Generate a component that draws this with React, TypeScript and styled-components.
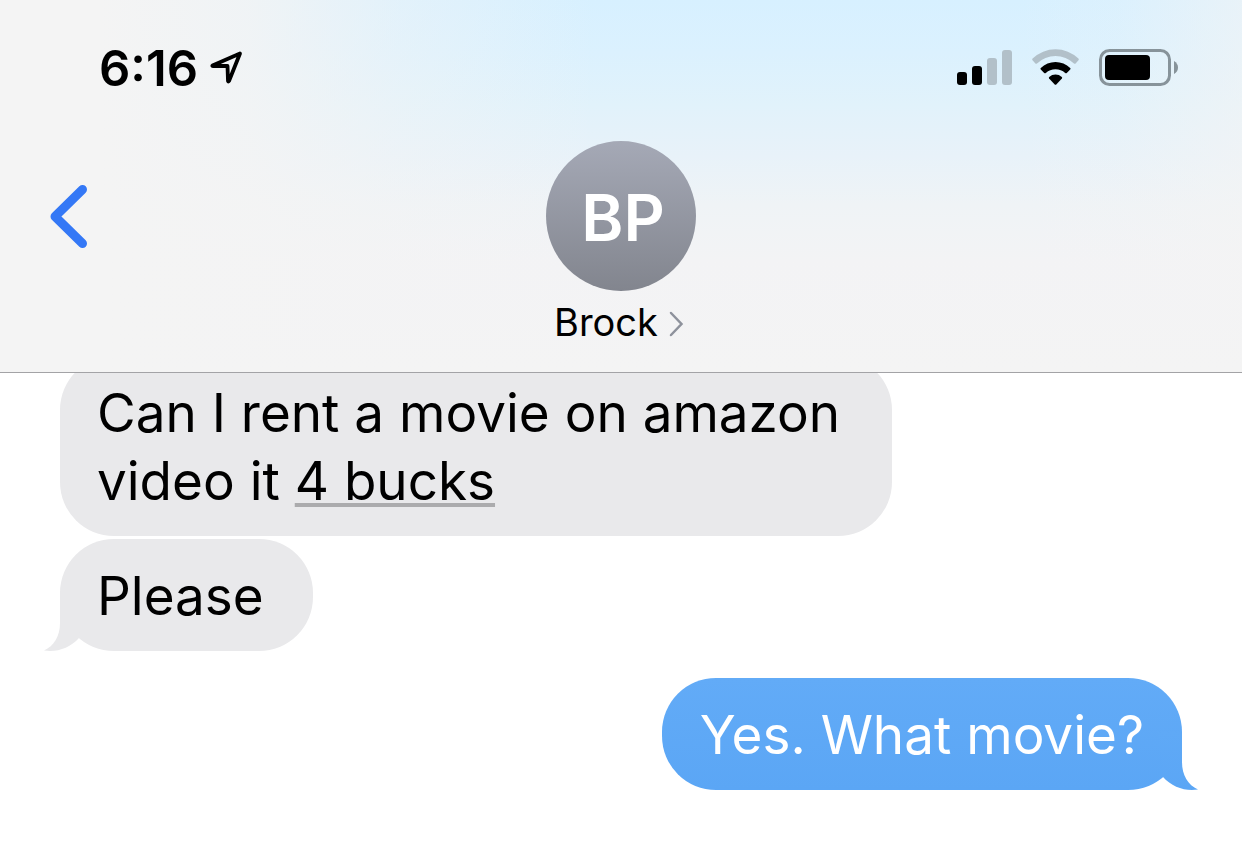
import React from "react";
import styled, { createGlobalStyle } from "styled-components";

const GlobalStyle = createGlobalStyle`
  *, *::before, *::after { box-sizing: border-box; }
  body {
    margin: 0;
    background: #ffffff;
    color: #000000;
    font-family: Inter, "Liberation Sans", sans-serif;
  }
  button {
    border: 0;
    padding: 0;
    background: none;
    color: inherit;
    font: inherit;
    cursor: pointer;
  }
`;

const Screen = styled.div`
  display: flex;
  flex-direction: column;
  min-height: 100vh;
  overflow: hidden;
`;

const Header = styled.header`
  position: relative;
  z-index: 1;
  border-bottom: 1px solid #a3a3a6;
  background:
    linear-gradient(90deg, #f4f4f4 8%, rgba(244, 244, 244, 0.85) 20%, rgba(244, 244, 244, 0.4) 32%, rgba(244, 244, 244, 0) 48%),
    linear-gradient(270deg, rgba(244, 244, 244, 0.6) 0%, rgba(244, 244, 244, 0.15) 10%, rgba(244, 244, 244, 0) 18%),
    linear-gradient(#d7f0ff 0%, #dbf1fe 14%, #e1f2fb 28%, #e8f2f9 42%, #eff3f6 55%, #f3f3f5 70%, #f4f4f4 100%);
`;

const StatusBar = styled.div`
  display: flex;
  align-items: center;
  justify-content: space-between;
  padding: 38px 64px 0 99px;
`;

const StatusGroup = styled.div<{ $gap: number }>`
  display: flex;
  align-items: center;
  gap: ${({ $gap }) => $gap}px;
`;

const Time = styled.time`
  padding-top: 2px;
  font-size: 49px;
  font-weight: 600;
  line-height: 58px;
`;

const NavBar = styled.nav`
  display: grid;
  grid-template-columns: 1fr auto 1fr;
  align-items: start;
  padding: 43px 48px 27px;
`;

const BackButton = styled.button`
  display: flex;
  justify-self: start;
  align-items: center;
  height: 150px;
`;

const ContactButton = styled.button`
  display: flex;
  flex-direction: column;
  align-items: center;
  gap: 8px;
`;

const Avatar = styled.span`
  display: flex;
  align-items: center;
  justify-content: center;
  width: 150px;
  height: 150px;
  padding: 2px 0 0 4px;
  border-radius: 50%;
  background: linear-gradient(#a5a9b6, #82858e);
  color: #ffffff;
  font-size: 64px;
  font-weight: 600;
`;

const ContactName = styled.span`
  display: flex;
  align-items: center;
  gap: 10px;
  font-size: 38px;
  line-height: 46px;
`;

const Messages = styled.ol`
  display: flex;
  flex-direction: column;
  gap: 3px;
  margin: -17px 0 0;
  padding: 0 60px 60px;
  list-style: none;
`;

const Message = styled.li<{ $sent?: boolean }>`
  position: relative;
  align-self: ${({ $sent }) => ($sent ? "flex-end" : "flex-start")};
  max-width: 832px;
  margin-top: ${({ $sent }) => ($sent ? "24px" : "0")};
  padding: ${({ $sent }) => ($sent ? "23px 38px 21px" : "23px 49px 21px 37px")};
  border-radius: 54px;
  background: ${({ $sent }) => ($sent ? "linear-gradient(#62abf7, #5ba6f5)" : "#e9e9eb")};
  color: ${({ $sent }) => ($sent ? "#ffffff" : "#000000")};
  font-size: 53px;
  line-height: 68px;
`;

const Tail = styled.svg<{ $sent?: boolean }>`
  position: absolute;
  bottom: 0;
  ${({ $sent }) => ($sent ? "right: -16px; transform: scaleX(-1);" : "left: -16px;")}
`;

const AmountLink = styled.a`
  color: inherit;
  text-decoration: underline;
  text-decoration-color: #ababad;
  text-decoration-thickness: 4px;
  text-decoration-skip-ink: none;
  text-underline-offset: 3px;
`;

function LocationIcon() {
  return (
    <svg width="34" height="38" viewBox="0 0 34 38" fill="none" aria-hidden="true">
      <path
        d="M31 4.500 3.500 16.500Q3 17 4 17L18.500 17 19 32Q19.300 33 20 32Z"
        stroke="#000"
        strokeWidth="3.800"
        strokeLinejoin="round"
      />
    </svg>
  );
}

function SignalIcon() {
  return (
    <svg width="55" height="38" viewBox="0 0 55 38" role="img" aria-label="Signal: 2 of 4 bars">
      <rect x="0" y="23" width="10" height="13" rx="3" />
      <rect x="15" y="17" width="10" height="19" rx="3" />
      <rect x="30" y="9" width="10" height="27" rx="3" fill="#b2c0c9" />
      <rect x="45" y="1" width="10" height="35" rx="3" fill="#b2c0c9" />
    </svg>
  );
}

function WifiIcon() {
  return (
    <svg width="47" height="38" viewBox="0 0 47 38" role="img" aria-label="Wi-Fi">
      <path
        d="M.6 9.600A33 33 0 0 1 46.400 9.600Q47.200 10.400 46.500 11.200L43.600 14.400Q42.800 15.100 42 14.400A27 27 0 0 0 5 14.400Q4.200 15.100 3.400 14.400L.5 11.200Q-.2 10.400 .6 9.600Z"
        fill="#b2c0c9"
      />
      <path d="M8.800 19A21 21 0 0 1 38.200 19Q39 19.800 38.200 20.600L34.800 24Q34 24.700 33.200 24A14.500 14.500 0 0 0 13.800 24Q13 24.700 12.200 24L8.800 20.600Q8 19.800 8.800 19Z" />
      <path d="M17.200 28A9.500 9.500 0 0 1 29.800 28Q30.500 28.700 29.900 29.400L24.300 35.400Q23.500 36.200 22.700 35.400L17.100 29.400Q16.500 28.700 17.200 28Z" />
    </svg>
  );
}

function BatteryIcon() {
  return (
    <svg width="79" height="38" viewBox="0 0 79 38" role="img" aria-label="Battery">
      <rect x="1.500" y="1.500" width="69" height="34" rx="9" fill="none" stroke="#87939a" strokeWidth="3" />
      <rect x="6" y="6" width="45" height="25" rx="4" />
      <path d="M75 12Q79 14.500 79 18.500T75 25Z" fill="#87939a" />
    </svg>
  );
}

function BubbleTail({ sent }: { sent?: boolean }) {
  return (
    <Tail $sent={sent} width="42" height="58" viewBox="0 0 42 58" aria-hidden="true">
      <defs>
        <linearGradient id="sentTail" x1="0" y1="0" x2="0" y2="1">
          <stop offset="0" stopColor="#5fa9f6" />
          <stop offset="1" stopColor="#5ba6f5" />
        </linearGradient>
      </defs>
      <path
        d="M16 0V30C16 43 10 53 0 57.500C13 59.500 26 55 35 45L40 0Z"
        fill={sent ? "url(#sentTail)" : "#e9e9eb"}
      />
    </Tail>
  );
}

export default function App() {
  return (
    <Screen>
      <GlobalStyle />
      <Header>
        <StatusBar>
          <StatusGroup $gap={11}>
            <Time>6:16</Time>
            <LocationIcon />
          </StatusGroup>
          <StatusGroup $gap={20}>
            <SignalIcon />
            <WifiIcon />
            <BatteryIcon />
          </StatusGroup>
        </StatusBar>
        <NavBar>
          <BackButton type="button" aria-label="Back">
            <svg width="42" height="66" viewBox="0 0 42 66" fill="none">
              <path d="M34.500 6.500 7 33.500 34.500 60.500" stroke="#3478f6" strokeWidth="9" strokeLinecap="round" strokeLinejoin="round" />
            </svg>
          </BackButton>
          <ContactButton type="button">
            <Avatar>BP</Avatar>
            <ContactName>
              Brock
              <svg width="20" height="30" viewBox="0 0 20 30" fill="none" aria-hidden="true">
                <path d="M3 6 13.500 17 3 28" stroke="#8e929c" strokeWidth="2.500" strokeLinecap="round" />
              </svg>
            </ContactName>
          </ContactButton>
        </NavBar>
      </Header>
      <Messages>
        <Message>
          Can I rent a movie on amazon video it <AmountLink href="#amount">4 bucks</AmountLink>
        </Message>
        <Message>
          Please
          <BubbleTail />
        </Message>
        <Message $sent>
          Yes. What movie?
          <BubbleTail sent />
        </Message>
      </Messages>
    </Screen>
  );
}
